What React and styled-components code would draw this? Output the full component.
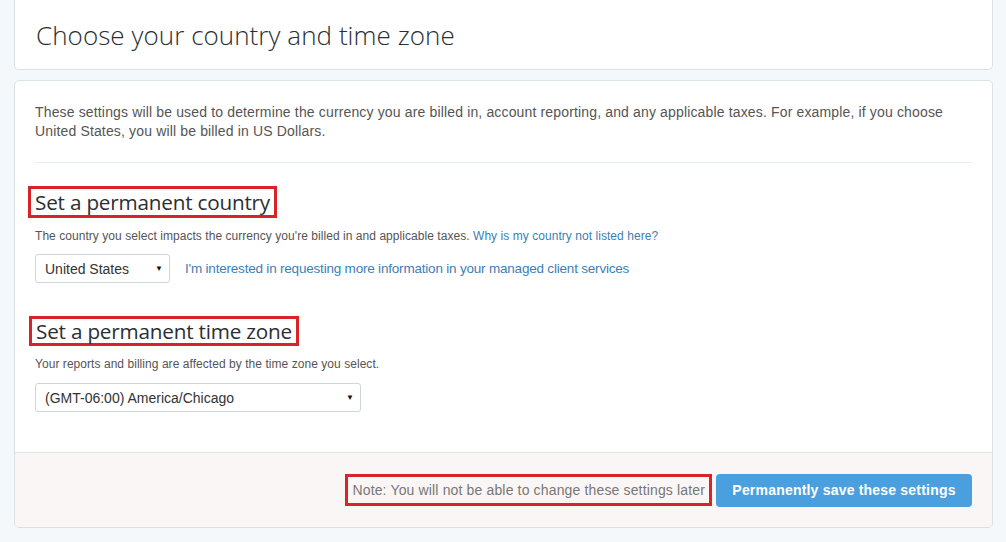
import React from "react";
import styled, { createGlobalStyle } from "styled-components";

const Global = createGlobalStyle`
  html, body { margin: 0; padding: 0; }
  body {
    background: #f5f8fa;
    font-family: "Liberation Sans", Arial, sans-serif;
    color: #555;
    overflow: hidden;
  }
`;

const Page = styled.div`
  display: flex;
  flex-direction: column;
  gap: 10px;
  padding: 0 13px 0 14px;
  width: 979px;
`;

const Panel = styled.section`
  background: #fff;
  border: 1px solid #d9e1e7;
  border-radius: 5px;
  overflow: hidden;
`;

const HeaderPanel = styled(Panel)`
  border-top: none;
  border-radius: 0 0 5px 5px;
  height: 70px;
  display: flex;
  align-items: center;
  padding: 0 21px;
  box-sizing: border-box;
`;

const Title = styled.h1`
  margin: 0;
  font-family: "Open Sans", sans-serif;
  font-weight: 300;
  font-size: 26px;
  letter-spacing: 0.05px;
  color: #292f33;
`;

const Body = styled.div`
  padding: 22px 20px 40px 20px;
  display: flex;
  flex-direction: column;
`;

const Intro = styled.p`
  margin: 0;
  font-size: 14px;
  line-height: 19px;
  letter-spacing: 0.15px;
  color: #555;
`;

const Divider = styled.hr`
  margin: 21px 0 0 0;
  border: none;
  border-top: 1px solid #e8edf0;
`;

const Section = styled.div`
  display: flex;
  flex-direction: column;
  align-items: flex-start;
  margin-top: ${(p) => p.$top}px;
`;

const Annotated = styled.div`
  display: inline-flex;
  align-items: center;
  border: 3px solid #d8232a;
  padding: ${(p) => p.$pad || "0 4px"};
  margin-left: ${(p) => p.$shift || 0}px;
`;

const Heading = styled.h2`
  margin: 0;
  font-family: "Open Sans", sans-serif;
  font-weight: 400;
  font-size: 20.7px;
  line-height: ${(p) => p.$lh}px;
  color: #292f33;
  letter-spacing: -0.2px;
`;

const Help = styled.p`
  margin: 10px 0 0 0;
  font-size: 12px;
  line-height: 16px;
  color: #555;
  letter-spacing: 0.05px;
`;

const Link = styled.a`
  color: #3b7fb5;
  text-decoration: none;
  cursor: pointer;
`;

const Row = styled.div`
  display: flex;
  align-items: center;
  gap: 15px;
  margin-top: ${(p) => p.$top}px;
`;

const Select = styled.div`
  box-sizing: border-box;
  width: ${(p) => p.$w}px;
  height: 29px;
  border: 1px solid #ccd6dd;
  border-radius: 3px;
  background: #fff;
  display: flex;
  align-items: center;
  justify-content: space-between;
  padding: 0 6px 0 9px;
  font-size: 14px;
  color: #333;
`;

const Arrow = styled.span`
  font-size: 8px;
  color: #111;
  line-height: 1;
`;

const BigLink = styled(Link)`
  font-size: 13.5px;
  letter-spacing: -0.2px;
`;

const Footer = styled.div`
  background: #faf6f5;
  border-top: 1px solid #e1e8ed;
  display: flex;
  justify-content: flex-end;
  align-items: center;
  gap: 4px;
  padding: 20px 20px 20px 20px;
  height: 34px;
`;

const Note = styled.span`
  font-size: 14px;
  color: #777;
  letter-spacing: 0.15px;
  line-height: 26px;
`;

const Button = styled.button`
  height: 33px;
  width: 256px;
  border: none;
  border-radius: 4px;
  background: #4a9fdf;
  color: #fff;
  font-family: "Liberation Sans", Arial, sans-serif;
  font-weight: bold;
  font-size: 14px;
  letter-spacing: 0.2px;
  cursor: pointer;
`;

export default function App() {
  return (
    <>
      <Global />
      <Page>
        <HeaderPanel>
          <Title>Choose your country and time zone</Title>
        </HeaderPanel>
        <Panel>
          <Body>
            <Intro>
              These settings will be used to determine the currency you are billed in, account reporting, and any
              applicable taxes. For example, if you choose United States, you will be billed in US Dollars.
            </Intro>
            <Divider />
            <Section $top={23}>
              <Annotated $shift={-7}>
                <Heading $lh={26}>Set a permanent country</Heading>
              </Annotated>
              <Help>
                The country you select impacts the currency you're billed in and applicable taxes.{" "}
                <Link>Why is my country not listed here?</Link>
              </Help>
              <Row $top={10}>
                <Select $w={135}>
                  <span>United States</span>
                  <Arrow>▼</Arrow>
                </Select>
                <BigLink>I'm interested in requesting more information in your managed client services</BigLink>
              </Row>
            </Section>
            <Section $top={33}>
              <Annotated $shift={-6}>
                <Heading $lh={24}>Set a permanent time zone</Heading>
              </Annotated>
              <Help>Your reports and billing are affected by the time zone you select.</Help>
              <Row $top={11}>
                <Select $w={326}>
                  <span>(GMT-06:00) America/Chicago</span>
                  <Arrow>▼</Arrow>
                </Select>
              </Row>
            </Section>
          </Body>
          <Footer>
            <Annotated $pad="0 4px">
              <Note>Note: You will not be able to change these settings later</Note>
            </Annotated>
            <Button>Permanently save these settings</Button>
          </Footer>
        </Panel>
      </Page>
    </>
  );
}
